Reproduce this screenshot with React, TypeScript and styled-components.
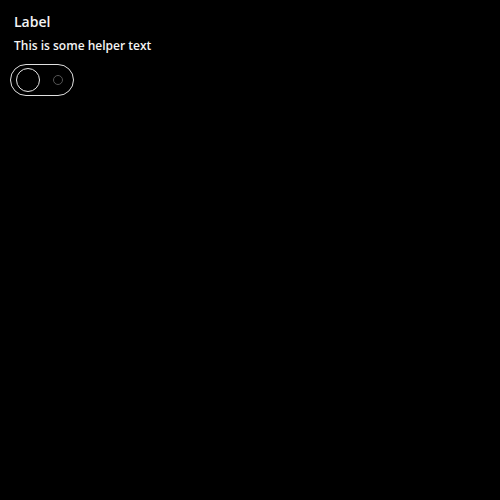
import React, { useState } from "react";
import styled, { createGlobalStyle } from "styled-components";

const Global = createGlobalStyle`
  html, body {
    margin: 0;
    padding: 0;
    background: #000;
  }
  body {
    font-family: "Open Sans", "Noto Sans", sans-serif;
    color: #f4f4f4;
  }
`;

const Field = styled.div`
  display: flex;
  flex-direction: column;
  align-items: flex-start;
  padding: 12px 10px;
`;

const Label = styled.label`
  font-size: 14px;
  font-weight: 600;
  line-height: 20px;
  padding-left: 4px;
  color: #f4f4f4;
`;

const Helper = styled.div`
  font-size: 12px;
  font-weight: 600;
  line-height: 18px;
  margin-top: 5px;
  padding-left: 4px;
  color: #f4f4f4;
`;

const Track = styled.button<{ $on: boolean }>`
  margin-top: 9px;
  box-sizing: border-box;
  width: 64px;
  height: 32px;
  border-radius: 16px;
  border: 1px solid #e0e0e0;
  background: #000;
  padding: 0 10px 0 5px;
  display: flex;
  align-items: center;
  justify-content: space-between;
  cursor: pointer;
`;

const Thumb = styled.span`
  box-sizing: border-box;
  width: 24px;
  height: 24px;
  border-radius: 50%;
  border: 1px solid #e8e8e8;
`;

const OffMark = styled.span`
  box-sizing: border-box;
  width: 10px;
  height: 10px;
  border-radius: 50%;
  border: 1px solid #555;
`;

export default function App() {
  const [on, setOn] = useState(false);
  return (
    <>
      <Global />
      <Field>
        <Label>Label</Label>
        <Helper>This is some helper text</Helper>
        <Track $on={on} role="switch" aria-checked={on} onClick={() => setOn(!on)}>
          <Thumb />
          <OffMark />
        </Track>
      </Field>
    </>
  );
}
